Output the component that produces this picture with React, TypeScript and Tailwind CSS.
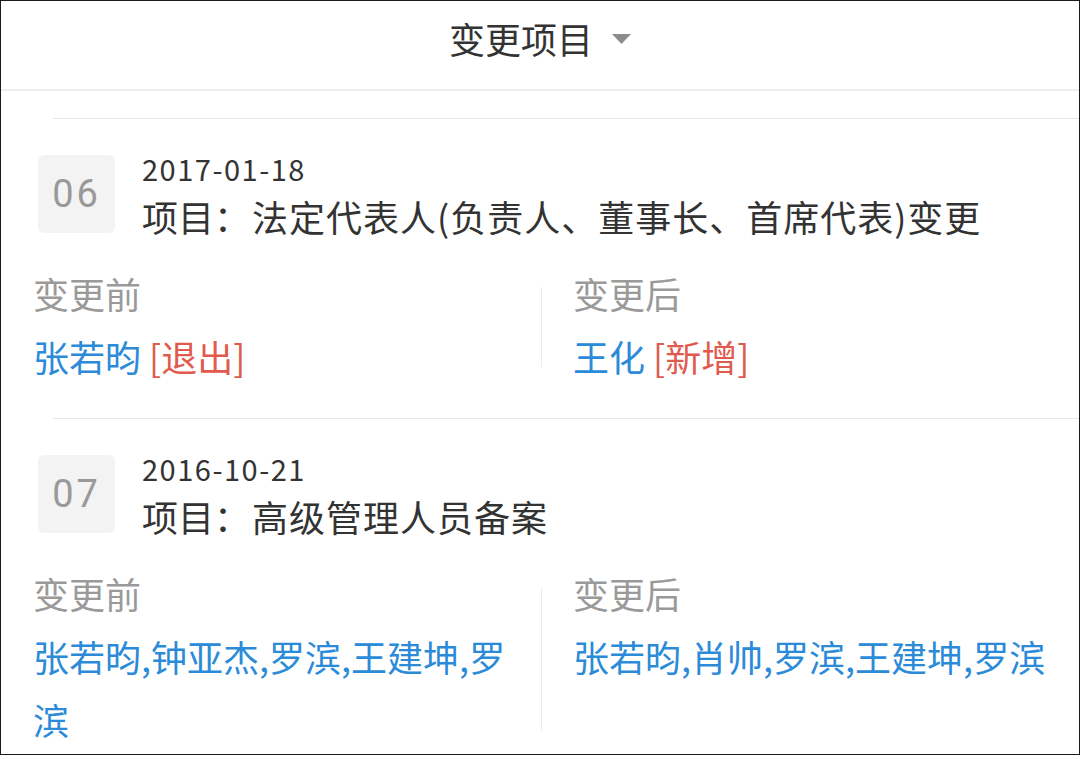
import { Fragment } from 'react';

interface Person {
  name: string;
  tag?: string;
}

interface ChangeItem {
  no: string;
  date: string;
  item: string;
  before: Person[];
  after: Person[];
}

const changes: ChangeItem[] = [
  {
    no: '06',
    date: '2017-01-18',
    item: '法定代表人(负责人、董事长、首席代表)变更',
    before: [{ name: '张若昀', tag: '[退出]' }],
    after: [{ name: '王化', tag: '[新增]' }],
  },
  {
    no: '07',
    date: '2016-10-21',
    item: '高级管理人员备案',
    before: [{ name: '张若昀' }, { name: '钟亚杰' }, { name: '罗滨' }, { name: '王建坤' }, { name: '罗滨' }],
    after: [{ name: '张若昀' }, { name: '肖帅' }, { name: '罗滨' }, { name: '王建坤' }, { name: '罗滨' }],
  },
];

function People({ list }: { list: Person[] }) {
  return (
    <p className="text-[36px] leading-[63px] text-[#2b8bd8]">
      {list.map((p, i) => (
        <Fragment key={i}>
          {i > 0 && ','}
          {p.name}
          {p.tag && <span className="text-[#e05b4e]"> {p.tag}</span>}
        </Fragment>
      ))}
    </p>
  );
}

function ChangeRow({ data }: { data: ChangeItem }) {
  return (
    <section>
      <div className="ml-[52px] h-px bg-[#e6e6e6]" />
      <div className="pl-[32px] pt-[29px] pb-[30px]">
        <div className="flex items-start">
          <div className="ml-[5px] mt-[7px] flex h-[78px] w-[77px] items-center justify-center rounded-[6px] bg-[#f3f3f3]">
            <span className="font-['Roboto',sans-serif] text-[38px] tracking-[3px] text-[#999]">{data.no}</span>
          </div>
          <div className="ml-[27px] text-[#333]">
            <div className="text-[29px] leading-[40px] tracking-[1.5px]">{data.date}</div>
            <div className="text-[36px] leading-[56px]">
              项目<span className="inline-block w-[36px]">：</span>
              <span className="ml-[2px] tracking-[1px]">{data.item}</span>
            </div>
          </div>
        </div>

        <div className="mt-[18px] flex">
          <div className="w-[490px]">
            <p className="text-[36px] leading-[63px] text-[#9a9a9a]">变更前</p>
            <People list={data.before} />
          </div>
          <div className="ml-[18px] mt-[25px] mb-[21px] w-px bg-[#ebebeb]" />
          <div className="flex-1 pl-[31px]">
            <p className="text-[36px] leading-[63px] text-[#9a9a9a]">变更后</p>
            <People list={data.after} />
          </div>
        </div>
      </div>
    </section>
  );
}

export default function App() {
  return (
    <div className="h-[755px] w-[1080px] overflow-hidden border border-[#1a1a1a] bg-white font-['Noto_Sans_CJK_SC',sans-serif]">
      {/* Title bar */}
      <header className="flex h-[90px] items-center justify-center gap-[19px] border-b-2 border-[#ededed] pb-[14px]">
        <span className="text-[36px] text-[#333]">变更项目</span>
        <svg width="19" height="10" viewBox="0 0 19 10" className="mt-[1px]">
          <path d="M0 0 H19 L9.5 10 Z" fill="#8c8c8c" />
        </svg>
      </header>

      <div className="h-[27px]" />

      {changes.map((c) => (
        <ChangeRow key={c.no} data={c} />
      ))}
    </div>
  );
}
